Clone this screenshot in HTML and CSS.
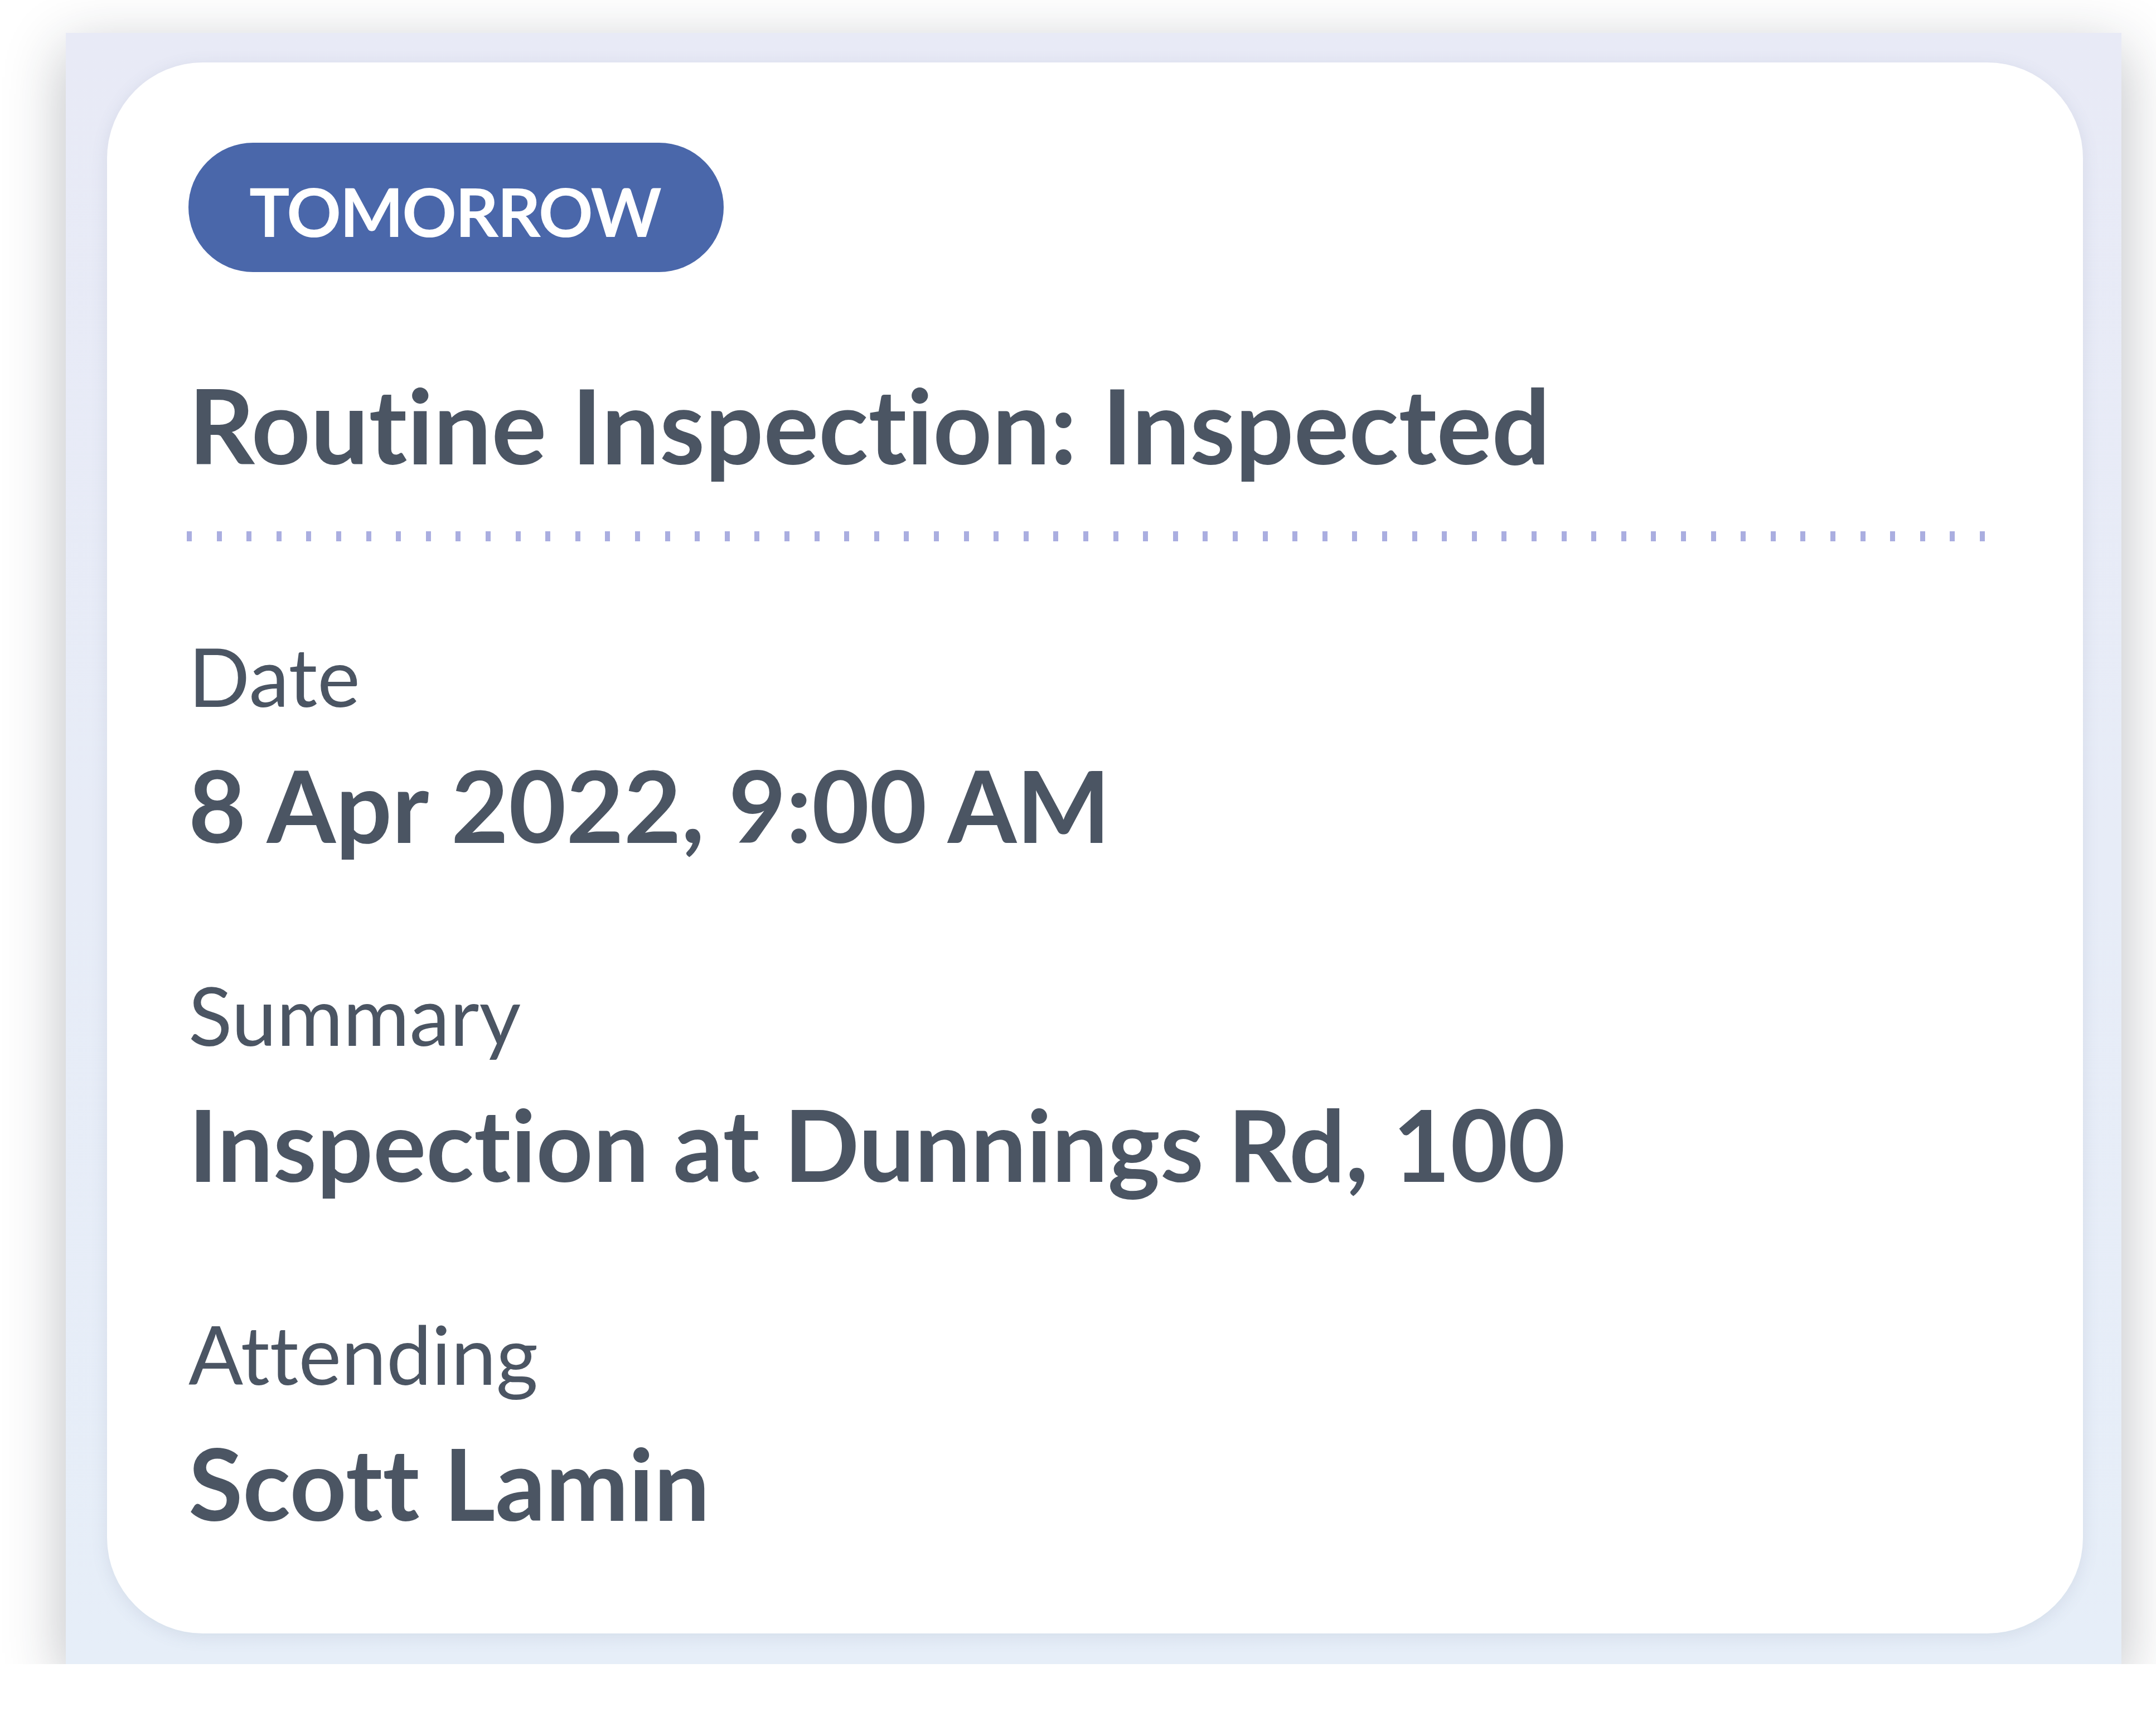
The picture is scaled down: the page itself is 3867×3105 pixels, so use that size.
FILE: index.html
```html
<!DOCTYPE html>
<html lang="en">
<head>
    <meta charset="UTF-8">
    <meta name="viewport" content="width=device-width, initial-scale=1.0">
    <title>Inspection</title>
    <link rel="stylesheet" href="styles.css">
</head>
<body>

<div class="frame">
    <div class="card">
        <span class="badge">TOMORROW</span>
        <h1 class="title">Routine Inspection: Inspected</h1>
        <div class="divider"></div>
        <dl class="details">
            <div class="field">
                <dt>Date</dt>
                <dd>8 Apr 2022, 9:00 AM</dd>
            </div>
            <div class="field">
                <dt>Summary</dt>
                <dd>Inspection at Dunnings Rd, 100</dd>
            </div>
            <div class="field">
                <dt>Attending</dt>
                <dd>Scott Lamin</dd>
            </div>
        </dl>
    </div>
</div>

</body>
</html>
```

FILE: styles.css
```css
body {
    margin: 0;
    background: #fff;
    font-family: Lato, "Noto Sans", sans-serif;
    font-variant-ligatures: none;
    font-feature-settings: "liga" 0, "dlig" 0;
    color: #4b5563;
}

.frame {
    width: 3687px;
    height: 2926px;
    margin: 59px 0 0 118px;
    padding: 53px 69px 55px 74px;
    box-sizing: border-box;
    background: linear-gradient(#e8eaf6, #e6eef8);
    box-shadow: 0 30px 100px rgba(30, 35, 50, 0.3);
}

.card {
    height: 100%;
    box-sizing: border-box;
    display: flex;
    flex-direction: column;
    align-items: flex-start;
    padding: 144px 146px 0;
    background: #fff;
    border-radius: 172px;
    box-shadow: 0 6px 30px rgba(80, 95, 130, 0.12);
}

.badge {
    display: flex;
    align-items: center;
    height: 232px;
    padding: 12px 114px 0 109px;
    box-sizing: border-box;
    border-radius: 116px;
    background: #4a67aa;
    color: #fff;
    font-size: 121px;
    font-weight: 700;
    letter-spacing: -2.5px;
    line-height: 1;
}

.title {
    margin: 181px 0 0;
    font-size: 185px;
    font-weight: 700;
    line-height: 1;
}

.divider {
    align-self: stretch;
    height: 18px;
    margin: 99px 0 0 -3px;
    background: repeating-linear-gradient(90deg, #aaaee0 0 9px, transparent 9px 53.6px);
}

.details {
    display: flex;
    flex-direction: column;
    gap: 216px;
    margin: 169px 0 0;
}

.field dt {
    font-size: 145px;
    line-height: 1;
}

.field dd {
    margin: 69px 0 0;
    font-size: 178px;
    font-weight: 700;
    line-height: 1;
}
```
